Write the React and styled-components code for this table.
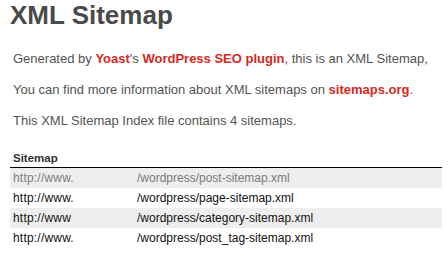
import styled, { createGlobalStyle } from "styled-components";

const GlobalStyle = createGlobalStyle`
  html, body {
    margin: 0;
    padding: 0;
    background: #fff;
  }
  body {
    font-family: "Liberation Sans", Arial, Helvetica, sans-serif;
    font-size: 13px;
    color: #545353;
  }
`;

const StContent = styled.div`
  padding: 0 6px 0 10px;
`;

const StTitle = styled.h1`
  margin: 0;
  font-size: 26px;
  font-weight: bold;
  color: #4a4a4a;
  line-height: 30px;
`;

const StExpl = styled.p`
  margin: ${(props) => props.$top || 0}px 3px 0;
  line-height: 17px;
  font-size: 13px;
`;

const StLink = styled.a`
  color: #d42a22;
  font-weight: bold;
  text-decoration: none;
`;

const StTable = styled.table`
  margin-top: 21px;
  width: 100%;
  border: none;
  border-collapse: collapse;
`;

const StTh = styled.th`
  text-align: left;
  font-size: 11.5px;
  font-weight: bold;
  color: #333;
  padding: 2px 3px 2px;
  line-height: 13px;
  border-bottom: 1px solid #000;
`;

const StRow = styled.tr`
  background-color: ${(props) => (props.$odd ? "#eeeeee" : "#fff")};
`;

const StTd = styled.td`
  font-size: 12px;
  height: 20px;
  padding: 0 3px;
  line-height: 20px;
  width: ${(props) => props.$width || "auto"};
  color: ${(props) => (props.$visited ? "#7a7a7a" : "#111")};
  letter-spacing: ${(props) => (props.$spaced ? "0.2px" : "0")};
`;

const sitemaps = [
  { host: "http://www.", path: "/wordpress/post-sitemap.xml", visited: true },
  { host: "http://www.", path: "/wordpress/page-sitemap.xml" },
  { host: "http://www", path: "/wordpress/category-sitemap.xml" },
  { host: "http://www.", path: "/wordpress/post_tag-sitemap.xml" },
];

export default function App() {
  return (
    <>
      <GlobalStyle />
      <StContent>
        <StTitle>XML Sitemap</StTitle>
        <StExpl $top={20}>
          Generated by <StLink>Yoast</StLink>'s <StLink>WordPress SEO plugin</StLink>, this is an XML Sitemap,
        </StExpl>
        <StExpl $top={14}>
          You can find more information about XML sitemaps on <StLink>sitemaps.org</StLink>.
        </StExpl>
        <StExpl $top={14}>This XML Sitemap Index file contains 4 sitemaps.</StExpl>
        <StTable>
          <thead>
            <tr>
              <StTh colSpan={2}>Sitemap</StTh>
            </tr>
          </thead>
          <tbody>
            {sitemaps.map((item, idx) => (
              <StRow key={idx} $odd={idx % 2 === 0}>
                <StTd $width="118px" $visited={item.visited} $spaced>
                  {item.host}
                </StTd>
                <StTd $visited={item.visited}>{item.path}</StTd>
              </StRow>
            ))}
          </tbody>
        </StTable>
      </StContent>
    </>
  );
}
